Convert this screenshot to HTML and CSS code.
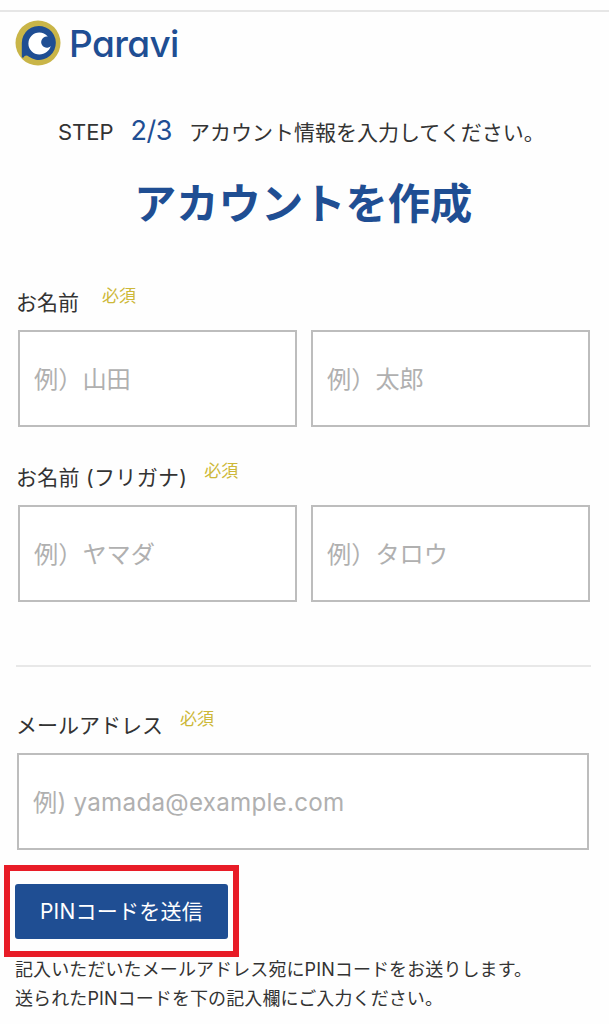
FILE: index.html
```html
<!DOCTYPE html>
<html lang="ja">
<head>
    <meta charset="UTF-8">
    <meta name="viewport" content="width=device-width, initial-scale=1.0">
    <title>Paravi</title>
    <link rel="stylesheet" href="styles.css">
</head>
<body>
    <header class="header">
        <svg class="logo-mark" viewBox="0 0 46 46">
            <circle cx="23" cy="23" r="22.5" fill="#c9b548"/>
            <path d="M6.8 23 A17 17 0 1 1 14 36.8 C11.5 34.8 10 35 8 38 L6.8 37 Z" fill="#1f4e93"/>
            <path d="M32.8 16.6 C30.5 14 27.5 12.6 24.3 12.6 A10.9 10.9 0 1 0 24.3 34.4 C30 34.4 34.3 31 35.8 26 A5.6 5.6 0 1 1 32.8 16.6 Z" fill="#fff"/>
        </svg>
        <span class="logo-text">Paravi</span>
    </header>

    <p class="step"><span class="step-word">STEP</span><span class="step-number">2/3</span>アカウント情報を入力してください。</p>
    <h1 class="title">アカウントを作成</h1>

    <form class="form" action="#" method="POST">
        <div class="label-row">
            <label for="lastName">お名前</label>
            <span class="required">必須</span>
        </div>
        <div class="input-row">
            <input type="text" id="lastName" placeholder="例）山田">
            <input type="text" id="firstName" placeholder="例）太郎">
        </div>

        <div class="label-row kana">
            <label for="lastKana">お名前 (フリガナ)</label>
            <span class="required">必須</span>
        </div>
        <div class="input-row">
            <input type="text" id="lastKana" placeholder="例）ヤマダ">
            <input type="text" id="firstKana" placeholder="例）タロウ">
        </div>

        <hr class="divider">

        <div class="label-row mail">
            <label for="email">メールアドレス</label>
            <span class="required">必須</span>
        </div>
        <div class="input-row mail-row">
            <input type="email" id="email" placeholder="例) yamada@example.com">
        </div>

        <div class="pin-box">
            <button type="button" class="pin-button">PINコードを送信</button>
        </div>
        <p class="note">記入いただいたメールアドレス宛にPINコードをお送りします。<br>送られたPINコードを下の記入欄にご入力ください。</p>
    </form>
</body>
</html>
```
FILE: styles.css
```css
* {
    box-sizing: border-box;
}
body {
    margin: 0;
    padding-top: 10px;
    height: 1024px;
    overflow: hidden;
    background-color: #fefefe;
    color: #333;
    font-family: Inter, "Noto Sans CJK JP", sans-serif;
    font-size: 21px;
    font-weight: 390;
}
.header {
    display: flex;
    align-items: center;
    height: 68px;
    padding-left: 15px;
    border-top: 2px solid #e6e6e6;
}
.logo-mark {
    width: 46px;
    height: 46px;
    margin-top: -4px;
}
.logo-text {
    margin: -3px 0 0 8px;
    color: #1f4e93;
    font-size: 37px;
    font-weight: 500;
    letter-spacing: -0.6px;
    line-height: 46px;
    font-feature-settings: "cv11";
}
.step {
    display: flex;
    align-items: baseline;
    height: 40px;
    margin: 33px 0 0;
    padding-left: 58px;
    line-height: 40px;
    white-space: nowrap;
}
.step-word {
    font-size: 22px;
}
.step-number {
    margin: 0 17px;
    color: #1f4e93;
    font-size: 27px;
    letter-spacing: -0.5px;
}
.title {
    height: 50px;
    margin: 28px 0 0;
    padding-left: 134px;
    color: #1f4e93;
    font-size: 42.3px;
    font-weight: 700;
    line-height: 50px;
    white-space: nowrap;
}
.form {
    padding: 53px 19px 0 18px;
}
.label-row {
    display: flex;
    height: 48px;
    line-height: 41px;
    margin-left: -2px;
}
.label-row.kana {
    margin-top: 30px;
}
.label-row.mail {
    margin-top: 38px;
}
.required {
    margin-left: 23px;
    color: #cdb838;
    font-size: 17px;
    line-height: 28px;
}
.kana .required, .mail .required {
    margin-left: 17px;
}
.kana label {
    letter-spacing: 0.3px;
}
.input-row {
    display: flex;
    gap: 14px;
}
.mail-row {
    margin: 0 1px 0 -1px;
}
input {
    flex: 1;
    min-width: 0;
    height: 97px;
    padding: 2px 14px 0;
    border: 2px solid #bdbdbd;
    border-radius: 0;
    background-color: #fff;
    font: inherit;
    font-size: 24.2px;
}
.mail-row input {
    letter-spacing: 0.25px;
}
input::placeholder {
    color: #b0b0b0;
    opacity: 1;
}
.divider {
    height: 2px;
    margin: 63px -1px 0 -2px;
    border: 0;
    background-color: #e8e8e8;
}
.pin-box {
    width: 235px;
    height: 92px;
    margin: 15px 0 0 -14px;
    padding: 13px 6px 0 5px;
    border: 6px solid #e81c27;
}
.pin-button {
    display: block;
    width: 213px;
    height: 55px;
    padding: 0 0 3px;
    border: 0;
    border-radius: 3px;
    background-color: #1f4e93;
    color: #fff;
    font: inherit;
    letter-spacing: 0.25px;
    white-space: nowrap;
}
.note {
    margin: -2px 0 0 -3px;
    font-size: 18px;
    letter-spacing: 0.1px;
    line-height: 29px;
    white-space: nowrap;
}
```
